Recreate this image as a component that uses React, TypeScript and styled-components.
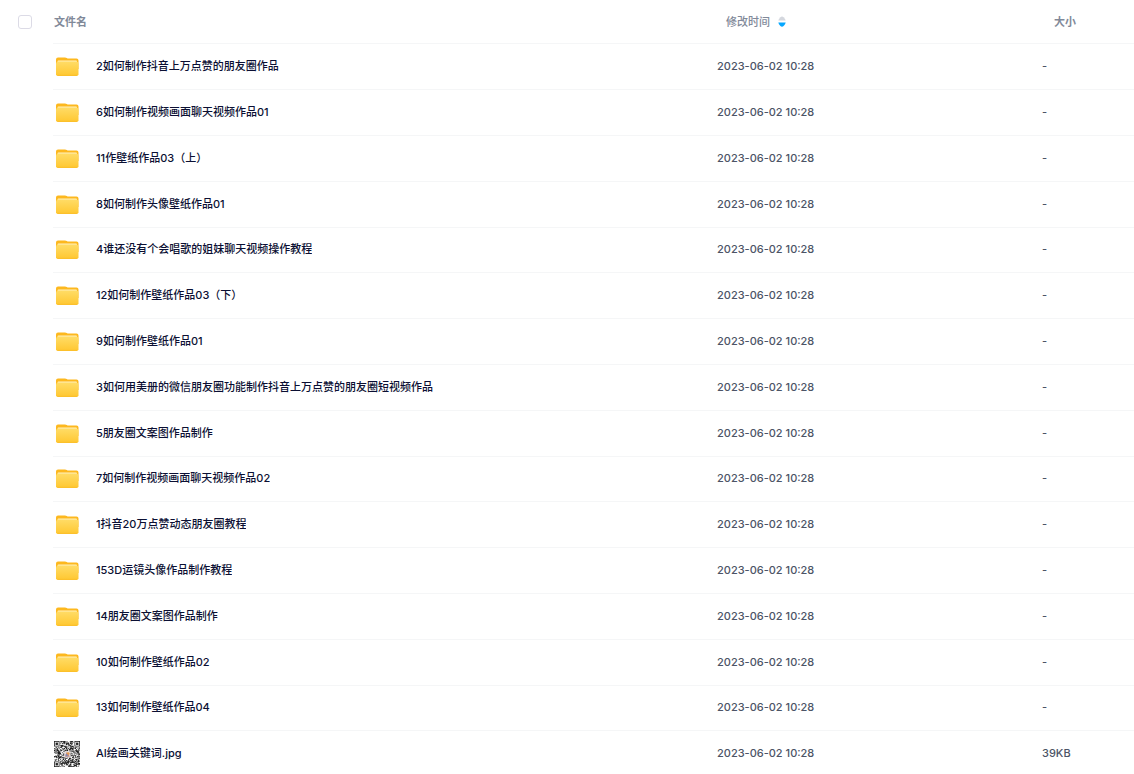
import React from "react";
import styled, { createGlobalStyle } from "styled-components";

const GlobalStyle = createGlobalStyle`
  *, *::before, *::after { box-sizing: border-box; }
  body {
    margin: 0;
    background: #fff;
    font-family: Inter, "Noto Sans CJK SC", sans-serif;
    font-size: 11px;
    line-height: 16px;
  }
  html { overflow-x: hidden; }
`;

const FileTable = styled.table`
  width: 100%;
  table-layout: fixed;
  border-collapse: separate;
  border-spacing: 0;
`;

const Column = styled.col<{ $width?: number }>`
  width: ${({ $width }) => ($width ? `${$width}px` : "auto")};
`;

const HeadCell = styled.th<{ $indent?: number; $line?: boolean }>`
  height: 44px;
  padding: 0 0 0 ${({ $indent = 0 }) => $indent}px;
  border-bottom: 1px solid ${({ $line = true }) => ($line ? "#f5f6f7" : "transparent")};
  color: #818999;
  font-weight: 700;
  text-align: left;
  vertical-align: middle;
  white-space: nowrap;
`;

const Row = styled.tr`
  height: 46px;
  &:nth-child(5n) { height: 45px; }
`;

const Cell = styled.td<{ $line?: boolean }>`
  padding: 0 0 2px;
  border-bottom: 1px solid ${({ $line = true }) => ($line ? "#f5f6f7" : "transparent")};
  color: #4c5466;
  font-weight: 500;
  vertical-align: middle;
  white-space: nowrap;
`;

const SelectAll = styled.input`
  appearance: none;
  display: block;
  width: 14px;
  height: 14px;
  margin: 0;
  border: 1px solid #dcdbe6;
  border-radius: 3px;
  background: #fff;
  cursor: pointer;
  &:checked { background: #06a7ff; border-color: #06a7ff; }
`;

const SortButton = styled.button`
  display: flex;
  align-items: center;
  gap: 8px;
  padding: 0;
  border: 0;
  background: none;
  color: inherit;
  font: inherit;
  font-weight: 500;
  cursor: pointer;
`;

const FileLink = styled.a`
  display: flex;
  align-items: center;
  gap: 16px;
  color: #0b0f33;
  text-decoration: none;
`;

const IconSlot = styled.span`
  display: flex;
  flex: none;
  justify-content: flex-end;
  width: 27px;
  padding-top: 2px;
`;

const FileName = styled.span`
  overflow: hidden;
  text-overflow: ellipsis;
`;

const SortIcon = () => (
  <svg width="8" height="12" viewBox="0 0 8 12" aria-hidden="true">
    <path d="M0.3 4.6 Q0.6 3.2 2.4 1.2 Q4 -0.2 5.6 1.2 Q7.4 3.2 7.7 4.6 Z" fill="#d4d7de" />
    <path d="M0.3 6.4 Q0.6 8 2.4 10 Q4 11.6 5.6 10 Q7.4 8 7.7 6.4 Z" fill="#06a7ff" />
  </svg>
);

const FolderIcon = () => (
  <svg width="26" height="20" viewBox="0 0 26 20" aria-hidden="true">
    <defs>
      <linearGradient id="folder-front" x1="0" y1="0" x2="0" y2="1">
        <stop offset="0" stopColor="#ffdc66" />
        <stop offset="1" stopColor="#ffc730" />
      </linearGradient>
    </defs>
    <path d="M2 2.4 Q2 0.4 4 0.4 H11 Q12 0.4 12.8 1 Q13.5 1.6 14.5 1.6 H22.5 Q24.5 1.6 24.5 3.6 V12 H2 Z" fill="#fdb81e" />
    <path d="M3.6 4 Q3.6 3.4 4.4 3.4 H22.1 Q22.9 3.4 22.9 4 V8 H3.6 Z" fill="#fff0bd" />
    <path d="M2 6.8 Q2.2 5 4 4.6 H22.5 Q24.3 5 24.5 6.8 V17.2 Q24.5 19 22.5 19 H4 Q2 19 2 17.2 Z" fill="url(#folder-front)" />
    <path d="M3.4 18.4 H23.1" stroke="#fbbd29" strokeWidth="0.8" />
  </svg>
);

const QR_SIZE = 33;

const inFinder = (x: number, y: number) =>
  (x < 8 && y < 8) || (x > QR_SIZE - 9 && y < 8) || (x < 8 && y > QR_SIZE - 9);

const qrPath = (() => {
  let seed = 77;
  let d = "";
  for (let y = 0; y < QR_SIZE; y++) {
    for (let x = 0; x < QR_SIZE; x++) {
      seed = (seed * 1103515245 + 12345) % 2147483648;
      if (!inFinder(x, y) && seed / 2147483648 > 0.44) d += `M${x} ${y}h1v1h-1z`;
    }
  }
  return d;
})();

const QrThumbnail = () => (
  <svg width="26" height="26" viewBox={`0 0 ${QR_SIZE} ${QR_SIZE}`} aria-hidden="true">
    <rect width={QR_SIZE} height={QR_SIZE} fill="#fff" />
    <path d={qrPath} fill="#222" />
    {[[0, 0], [26, 0], [0, 26]].map(([x, y]) => (
      <g key={`${x}-${y}`}>
        <rect x={x + 0.5} y={y + 0.5} width="6" height="6" fill="none" stroke="#222" />
        <rect x={x + 2} y={y + 2} width="3" height="3" fill="#222" />
      </g>
    ))}
    <rect x="13" y="13" width="8" height="8" rx="1" fill="#e4dcdc" />
    <path d="M14 20 L16 14 L18 16 L20 20 Z" fill="#b98a86" />
    <circle cx="18" cy="16" r="1.8" fill="#e59a4e" />
    <circle cx="16" cy="18" r="1.4" fill="#8587b5" />
  </svg>
);

interface FileEntry {
  name: string;
  size?: string;
}

const files: FileEntry[] = [
  { name: "2如何制作抖音上万点赞的朋友圈作品" },
  { name: "6如何制作视频画面聊天视频作品01" },
  { name: "11作壁纸作品03（上）" },
  { name: "8如何制作头像壁纸作品01" },
  { name: "4谁还没有个会唱歌的姐妹聊天视频操作教程" },
  { name: "12如何制作壁纸作品03（下）" },
  { name: "9如何制作壁纸作品01" },
  { name: "3如何用美册的微信朋友圈功能制作抖音上万点赞的朋友圈短视频作品" },
  { name: "5朋友圈文案图作品制作" },
  { name: "7如何制作视频画面聊天视频作品02" },
  { name: "1抖音20万点赞动态朋友圈教程" },
  { name: "153D运镜头像作品制作教程" },
  { name: "14朋友圈文案图作品制作" },
  { name: "10如何制作壁纸作品02" },
  { name: "13如何制作壁纸作品04" },
  { name: "AI绘画关键词.jpg", size: "39KB" },
];

export default function App() {
  return (
    <>
      <GlobalStyle />
      <FileTable lang="zh-CN">
        <colgroup>
          <Column $width={53} />
          <Column />
          <Column $width={325} />
          <Column $width={92} />
        </colgroup>
        <thead>
          <tr>
            <HeadCell scope="col" $indent={18} $line={false}>
              <SelectAll type="checkbox" aria-label="全选" />
            </HeadCell>
            <HeadCell scope="col" $indent={1}>文件名</HeadCell>
            <HeadCell scope="col" $indent={9}>
              <SortButton type="button">
                修改时间
                <SortIcon />
              </SortButton>
            </HeadCell>
            <HeadCell scope="col" $indent={12}>大小</HeadCell>
          </tr>
        </thead>
        <tbody>
          {files.map(({ name, size }) => (
            <Row key={name}>
              <Cell $line={false} />
              <Cell>
                <FileLink href="#">
                  <IconSlot>{size ? <QrThumbnail /> : <FolderIcon />}</IconSlot>
                  <FileName>{name}</FileName>
                </FileLink>
              </Cell>
              <Cell>2023-06-02 10:28</Cell>
              <Cell>{size ?? "-"}</Cell>
            </Row>
          ))}
        </tbody>
      </FileTable>
    </>
  );
}
